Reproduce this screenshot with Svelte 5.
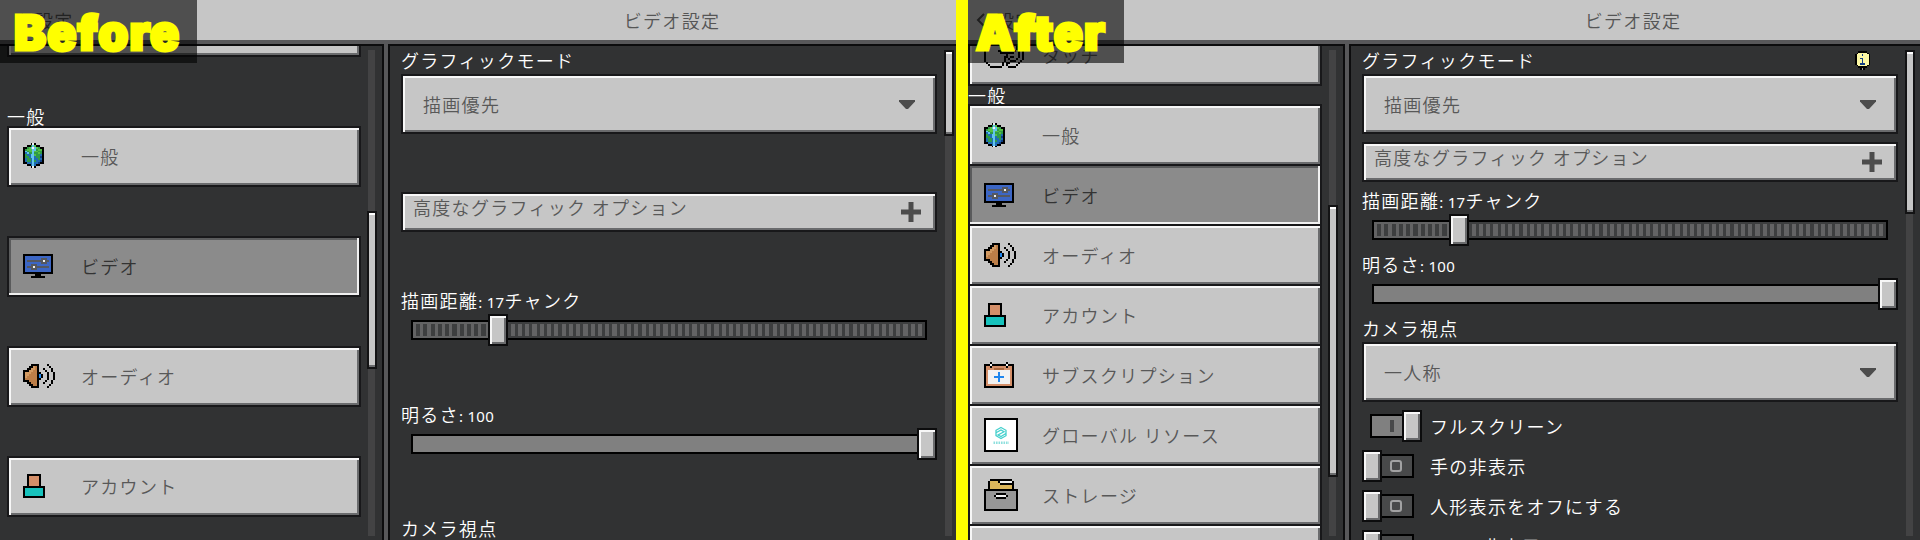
<script lang="ts">
	interface NavItem {
		icon: string;
		text: string;
		active?: boolean;
	}

	// one character per pixel, see COLORS
	const SPRITES: Record<string, string[]> = {
		globe: [
			'....KWK....',
			'..KKGCLKK..',
			'KKGLCWCLGKK',
			'KGLLLCCGLLK',
			'KCGLLCLLGGK',
			'KBCGGCGGLGK',
			'KGBBCCLGGBK',
			'KGGBCCBGGNK',
			'KBGGBCBBGBK',
			'KBGGBCGBBNK',
			'KKBBBCBBNKK',
			'..KKBCBKK..',
			'....KWK....'
		],
		monitor: [
			'KKKKKKKKKKKKKKK',
			'KMMMMMMMMMMMMMK',
			'KMMMMMMMMSSSMMK',
			'KMSSSSSSSSWSSMK',
			'KMMMMMMMMSSSMMK',
			'KMMMSSSMMMMMMMK',
			'KMSSSWSSSSSSSMK',
			'KMMMSSSMMMMMMMK',
			'KMMMMMMMMMMMMMK',
			'KKKKKKKKKKKKKKK',
			'......KKK......',
			'....KKKKKKK....'
		],
		speaker: [
			'....KKKK....K...',
			'...KKPOK.....K..',
			'..KKPPOK..K...K.',
			'KKKPPOOK...K..K.',
			'KPPPOOOKK...K..K',
			'KPPOOOOKAK..K..K',
			'KPOOOOOKAK..K..K',
			'KOOOOOOKK...K..K',
			'KKKOOOOK...K..K.',
			'..KKOOOK..K...K.',
			'...KKOOK.....K..',
			'....KKKK....K...'
		],
		account: [
			'..KKKKKKK..',
			'..KHHHHHK..',
			'..KHHHHHK..',
			'..KHHHHHK..',
			'..KHHHHHK..',
			'..KHHHHHK..',
			'KKKKKKKKKKK',
			'KTTTTTTTTTK',
			'KTTTTTTTTTK',
			'KTTTTTTTTTK',
			'KTTTTTTTTTK',
			'KKKKKKKKKKK'
		],
		calendar: [
			'...K.......K...',
			'KKKWKKKKKKKWKKK',
			'KHHKHHHHHHHKHHK',
			'KHHHHRRRRRHHHHK',
			'KHWWWWWWWWWWWHK',
			'KHWWWWWAWWWWWHK',
			'KHWWWWWAWWWWWHK',
			'KHWWWAAAAAWWWHK',
			'KHWWWWWAWWWWWHK',
			'KHWWWWWAWWWWWHK',
			'KHWWWWWWWWWWWHK',
			'KHHHHHHHHHHHHHK',
			'KKKKKKKKKKKKKKK'
		],
		storage: [
			'...KKKKKKKKKKK...',
			'..KYYYYKWWWWWWK..',
			'..KYYYYYKKKKKKK..',
			'..KYYYYYYYYYYYK..',
			'..KYYYYYYYYYYYK..',
			'KKKKKKKKKKKKKKKKK',
			'KEEEEEEEEEEEEEEEK',
			'KEEEEEKKKKKEEEEEK',
			'KEEEEKWWWWWKEEEEK',
			'KEEEEEKKKKKEEEEEK',
			'KEEEEEEEEEEEEEEEK',
			'KEEEEEEEEEEEEEEEK',
			'KEEEEEEEEEEEEEEEK',
			'KEEEEEEEEEEEEEEEK',
			'KEEEEEEEEEEEEEEEK',
			'KKKKKKKKKKKKKKKKK'
		],
		touch: [
			'....KKKKKKKKKKK...',
			'...K.........K.K..',
			'..K...........K.K.',
			'.K.......KKKKKK.K.K',
			'K......KK......K.K.K',
			'K.......KKKKKKK..K.K',
			'K..........K.....K.K',
			'K.........KK.KK..K.K',
			'K.........K.K...K..K',
			'K.........K..KKK..K.',
			'.K.......K.KK....K..',
			'..K......K.K....K...',
			'...KKKKKK...KKKK....'
		],
		bulb: [
			'..KKKKK..',
			'.KVVVVVK.',
			'KVVVNVVVK',
			'KVVVVVVVK',
			'KVVNNVVVK',
			'KVVVNVVVK',
			'KVVVNVVVK',
			'KVVNNNVVK',
			'.KVVVVVK.',
			'..KKKKK..',
			'...KEK...'
		]
	};

	const COLORS: Record<string, string> = {
		K: '#000', W: '#f2f2f2', S: '#55585f', M: '#3c66c4', A: '#1f86ee',
		P: '#d29a62', O: '#bc7e48', H: '#d48f69', R: '#a9683f', T: '#17c2bc',
		Y: '#dcb75c', E: '#979797', G: '#2f9a48', L: '#55c046',
		B: '#1f6cb4', C: '#62c4ec', N: '#123e83', V: '#fbf7a4'
	};

	const nav: NavItem[] = [
		{ icon: 'globe', text: '一般' },
		{ icon: 'monitor', text: 'ビデオ', active: true },
		{ icon: 'speaker', text: 'オーディオ' },
		{ icon: 'account', text: 'アカウント' },
		{ icon: 'calendar', text: 'サブスクリプション' },
		{ icon: 'pack', text: 'グローバル リソース' },
		{ icon: 'storage', text: 'ストレージ' },
		{ icon: '', text: '' }
	];

	let toggles = $state([
		{ latin: '', text: 'フルスクリーン', on: true },
		{ latin: '', text: '手の非表示', on: false },
		{ latin: '', text: '人形表示をオフにする', on: false },
		{ latin: 'HUD', text: 'の非表示', on: false }
	]);

	const chunks = 17;
	const brightness = 100;
</script>

{#snippet sprite(name: string, cell: number)}
	{@const rows = SPRITES[name]}
	{@const w = Math.max(...rows.map((r) => r.length))}
	<svg width={w * cell} height={rows.length * cell} viewBox="0 0 {w} {rows.length}" shape-rendering="crispEdges">
		{#each rows as row, y}
			{#each row as c, x}
				{#if c !== '.'}<rect {x} {y} width="1" height="1" fill={COLORS[c]} />{/if}
			{/each}
		{/each}
	</svg>
{/snippet}

{#snippet packIcon()}
	<svg width="34" height="34" viewBox="0 0 34 34">
		<rect x="1" y="1" width="32" height="32" fill="#fff" stroke="#000" stroke-width="2" />
		<path d="M17 9.5l5 2.8v5.4l-5 2.8-5-2.8v-5.4z M12.5 14.5l4.5-2.5 3 1.7-6 3.3 3 1.5 4.5-2.8" fill="none" stroke="#45d0cd" stroke-width="1.3" />
		<path d="M9.5 24.8h15.5" stroke="#8fe0de" stroke-width="2.4" stroke-dasharray="1.6 0.9" />
	</svg>
{/snippet}

{#snippet navButton(item: NavItem)}
	<button class="box nav-item" class:active={item.active}>
		<span class="icon">
			{#if item.icon === 'pack'}
				{@render packIcon()}
			{:else if item.icon}
				{@render sprite(item.icon, item.icon === 'globe' ? 1.9 : 2)}
			{/if}
		</span>
		{item.text}
	</button>
{/snippet}

{#snippet dropdown(text: string)}
	<button class="box dropdown">
		{text}
		<svg width="16" height="9" viewBox="0 0 16 9">
			<path d="M0 0h16v1.5L9 9H7L0 1.5z" fill="#4c4c4c" />
		</svg>
	</button>
{/snippet}

{#snippet slider(pos: number, ticked: boolean)}
	<div class="slider">
		<div class="track" class:ticked>
			{#if ticked}<div class="fill" style="width: {pos}%"></div>{/if}
		</div>
		<div class="box knob" style="left: {pos}%"></div>
	</div>
{/snippet}

{#snippet screen(compact: boolean)}
	<div class="screen" class:compact>
		<div class="topbar">
			<div class="back">
				<svg width="9" height="14" viewBox="0 0 9 14"><path d="M8 1L2 7l6 6" fill="none" stroke="#4c4c4c" stroke-width="2" /></svg>
				設定
			</div>
			<div class="title">ビデオ設定</div>
		</div>
		<div class="body">
			<div class="sidebar">
				<nav>
					{@render navButton({ icon: 'touch', text: 'タッチ' })}
					<div class="section">一般</div>
					{#each compact ? nav : nav.slice(0, 4) as item}
						{@render navButton(item)}
					{/each}
				</nav>
				<div class="rail"><div class="thumb"></div></div>
			</div>
			<div class="content">
				<div class="settings">
					<div class="label">
						グラフィックモード
						{#if compact}<span class="hint">{@render sprite('bulb', 1.7)}</span>{/if}
					</div>
					{@render dropdown('描画優先')}
					<button class="box advanced">
						高度なグラフィック オプション
						<svg width="20" height="20" viewBox="0 0 20 20"><path d="M7.5 0h5v7.5h7.5v5h-7.5v7.5h-5v-7.5h-7.5v-5h7.5z" fill="#4c4c4c" /></svg>
					</button>
					<div class="label">描画距離<i>: {chunks}</i>チャンク</div>
					{@render slider(16.9, true)}
					<div class="label">明るさ<i>: {brightness}</i></div>
					{@render slider(brightness, false)}
					<div class="label">カメラ視点</div>
					{#if compact}
						{@render dropdown('一人称')}
						{#each toggles as t}
							<div class="toggle-row">
								<button class="toggle" class:on={t.on} aria-label={t.text} onclick={() => (t.on = !t.on)}>
									<span class="switch"><span class="mark"></span></span>
									<span class="box knob"></span>
								</button>
								<span><i>{t.latin}</i>{t.text}</span>
							</div>
						{/each}
					{/if}
				</div>
				<div class="rail"><div class="thumb"></div></div>
			</div>
		</div>
	</div>
{/snippet}

<main>
	<section>
		{@render screen(false)}
		<div class="badge before"><span>Before</span></div>
	</section>
	<section>
		{@render screen(true)}
		<div class="badge after"><span>After</span></div>
	</section>
</main>

<style>
	:global(body) {
		margin: 0;
		overflow: hidden;
	}
	main {
		display: flex;
		gap: 12px;
		width: 1920px;
		height: 540px;
		overflow: hidden;
		background: #ffff00;
		font-family: 'Noto Sans CJK JP', sans-serif;
		font-size: 18px;
		font-weight: 350;
		letter-spacing: 1.3px;
		line-height: 24px;
		color: #fff;
		white-space: nowrap;
	}
	section {
		position: relative;
		width: 956px;
		height: 540px;
		overflow: hidden;
	}
	section:last-child {
		width: 952px;
	}
	.screen {
		display: flex;
		flex-direction: column;
		width: 956px;
		height: 540px;
	}
	.screen.compact {
		width: 959px;
		margin-left: -7px;
	}
	.topbar {
		display: flex;
		align-items: center;
		height: 40px;
		flex: none;
		background: #c6c6c6;
		color: #555;
		border-bottom: 4px solid #58585a;
	}
	.back {
		display: flex;
		align-items: center;
		gap: 11px;
		width: 375px;
		padding-left: 15px;
	}
	.title {
		width: 564px;
		text-align: center;
	}
	.body {
		display: flex;
		gap: 4px;
		flex: 1;
		min-height: 0;
		background: #58585a;
	}
	.sidebar,
	.content {
		display: flex;
		box-sizing: border-box;
		overflow: hidden;
		background: #313233;
		border-top: 2px solid #0c0c0d;
	}
	.sidebar {
		width: 384px;
		border-right: 2px solid #0c0c0d;
	}
	.content {
		flex: 1;
		border-left: 2px solid #0c0c0d;
	}
	i {
		font-family: 'Noto Sans', sans-serif;
		font-style: normal;
		font-size: 15px;
		font-weight: 400;
		letter-spacing: 0.3px;
	}
	.box {
		box-sizing: border-box;
		margin: 0;
		background: #c6c6c6;
		border: 2px solid #18181a;
		box-shadow: inset 2px 2px #f7f7f7, inset -2px -2px #6a6b6d;
	}
	button {
		display: flex;
		align-items: center;
		padding: 0;
		font: inherit;
		letter-spacing: inherit;
		color: #585858;
	}

	nav {
		display: flex;
		flex-direction: column;
		width: 354px;
		margin: -50px 0 0 7px;
	}
	.compact nav {
		margin-top: -22px;
	}
	.nav-item {
		flex: none;
		width: 354px;
		height: 61px;
		padding: 0 0 2px 14px;
	}
	.nav-item + .nav-item {
		margin-top: 49px;
	}
	.compact .nav-item {
		height: 62px;
		padding-bottom: 0;
	}
	.compact .nav-item + .nav-item {
		margin-top: -2px;
	}
	.nav-item.active {
		background: #8b8b8b;
		color: #333;
		box-shadow: inset -2px -2px #f0f0f0, inset 2px 2px #5a5b5c;
	}
	.icon {
		display: flex;
		width: 58px;
	}
	.section {
		flex: none;
		height: 18px;
		margin-top: 51px;
		line-height: 16px;
	}
	.compact .section {
		margin-top: 0;
		line-height: 18px;
	}

	.rail {
		width: 7px;
		height: 486px;
		margin: 4px 0 0 7px;
		flex: none;
		background: #434344;
	}
	.thumb {
		box-sizing: border-box;
		width: 10px;
		margin-left: -1.5px;
		border: 2px solid #131314;
		background: #c6c6c6;
		box-shadow: inset 0 2px #fff, inset 0 -2px #6a6b6d;
	}
	.sidebar .thumb {
		height: 158px;
		transform: translateY(161px);
	}
	.compact .sidebar .thumb {
		height: 272px;
		transform: translateY(155px);
	}
	.content .thumb {
		height: 86px;
	}
	.compact .content .thumb {
		height: 164px;
	}

	.settings {
		width: 537px;
		padding: 1px 0 0 11px;
	}
	.label {
		display: flex;
		align-items: baseline;
		box-sizing: border-box;
		height: 27px;
		padding-top: 1px;
		white-space: pre;
	}
	.slider + .label,
	.advanced + .label {
		margin-top: 55px;
	}
	.compact .slider + .label,
	.compact .advanced + .label {
		margin-top: 5px;
	}
	.hint {
		display: flex;
		align-self: flex-start;
		margin: 3px 29px 0 auto;
	}
	.dropdown {
		justify-content: space-between;
		width: 536px;
		height: 60px;
		padding: 0 20px 0 20px;
	}
	.advanced {
		justify-content: space-between;
		width: 536px;
		height: 40px;
		margin-top: 58px;
		padding: 0 14px 10px 10px;
	}
	.advanced svg {
		transform: translateY(5px);
	}
	.compact .advanced {
		margin-top: 8px;
	}
	.slider {
		position: relative;
		width: 516px;
		height: 32px;
		margin-left: 10px;
		padding-top: 6px;
		box-sizing: border-box;
	}
	.track {
		box-sizing: border-box;
		height: 20px;
		border: 2px solid #000;
		background: #808080;
	}
	.track.ticked {
		background: repeating-linear-gradient(90deg, #636364 0 4.2px, #3d3e3f 4.2px 7.276px) 2.6px 2px / 508px 12px no-repeat #3d3e3f;
	}
	.fill {
		height: 16px;
		background: repeating-linear-gradient(90deg, #3d3e3f 0 4.2px, #636364 4.2px 7.276px) 2.6px 2px / 508px 12px no-repeat #636364;
	}
	.knob {
		position: absolute;
		top: 0;
		width: 20px;
		height: 32px;
		border-color: #0c0c0d;
	}
	.slider .knob {
		margin-left: -10px;
	}

	.toggle-row {
		display: flex;
		align-items: center;
		gap: 16px;
		height: 32px;
		margin-top: 8px;
	}
	.toggle-row > span {
		padding-top: 1px;
	}
	.toggle {
		position: relative;
		width: 52px;
		height: 32px;
		border: 0;
		background: none;
	}
	.switch {
		display: flex;
		align-items: center;
		box-sizing: border-box;
		width: 44px;
		height: 24px;
		margin-left: 8px;
		padding-left: 18px;
		border: 2px solid #000;
		background: #48494a;
	}
	.on .switch {
		background: #808080;
	}
	.mark {
		box-sizing: border-box;
		width: 12px;
		height: 12px;
		border: 2px solid #a2a2a3;
		border-radius: 3px;
	}
	.on .mark {
		width: 4px;
		border: 0;
		border-radius: 0;
		background: #48494a;
	}
	.toggle .knob {
		left: 0;
	}
	.toggle.on .knob {
		left: 40px;
	}

	.badge {
		position: absolute;
		top: 0;
		left: 0;
		height: 63px;
		background: rgba(0, 0, 0, 0.6);
		font-family: Inter, sans-serif;
		font-size: 48px;
		font-weight: 900;
		letter-spacing: 1.2px;
		line-height: 65px;
		color: #ff0;
		-webkit-text-stroke: 3px #ff0;
		paint-order: stroke;
		stroke-linejoin: round;
	}
	.badge span {
		display: block;
	}
	.before {
		width: 197px;
		text-indent: 14px;
	}
	.after {
		width: 156px;
		text-indent: 8px;
	}
</style>
